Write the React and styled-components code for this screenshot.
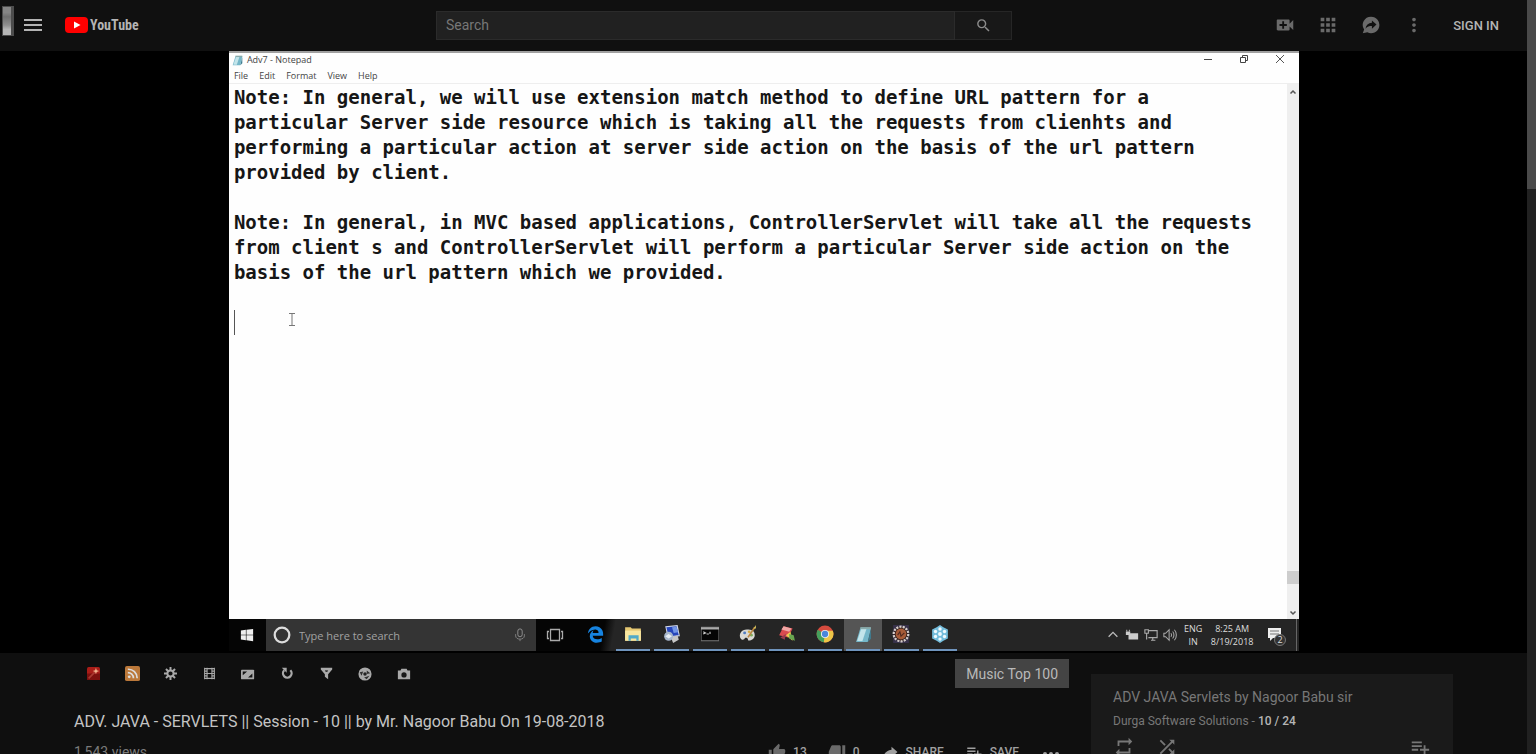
import React from "react";
import styled, { createGlobalStyle } from "styled-components";
import {
  MdMenu, MdSearch, MdVideoCall, MdApps, MdMoreVert, MdThumbUp, MdThumbDown,
  MdPlaylistAdd, MdRepeat, MdShuffle,
} from "react-icons/md";
import { FaWindows, FaEdgeLegacy } from "react-icons/fa";

const Global = createGlobalStyle`
  * { box-sizing: border-box; }
  body { margin: 0; background: #0f0f0f; font-family: Roboto, "Liberation Sans", sans-serif; }
  button { font: inherit; color: inherit; background: none; border: 0; padding: 0; cursor: pointer; }
  svg { display: block; flex: none; }
  h1, h2, p, pre { margin: 0; }
  a { color: inherit; text-decoration: none; }
`;

const Viewport = styled.div`
  display: flex;
  height: 100vh;
  overflow: hidden;
`;
const Page = styled.div`
  flex: 1;
  min-width: 0;
`;
const ScrollTrack = styled.div`
  width: 9px;
  background: #212121;
`;
const ScrollThumb = styled.div`
  height: 25%;
  background: #4a4a4a;
`;

/* Masthead */
const Header = styled.header`
  display: grid;
  grid-template-columns: minmax(0, 436fr) minmax(0, 576fr) minmax(0, 515fr);
  align-items: center;
  height: 51px;
  padding-bottom: 1px;
  background: #101010;
  color: #b4b4b4;
`;
const HeaderStart = styled.div`
  display: flex;
  align-items: center;
  padding-left: 2px;
`;
const Sliver = styled.span`
  width: 12px;
  height: 30px;
  margin: 0 7px 8px 0;
  border: 1px solid #4c4c4c;
  border-right-width: 3px;
  background: linear-gradient(#858585 0 20%, #6f6f6f 35%, #8f8f8f 65%, #b5b5b5 80%);
`;
const Logo = styled.a`
  display: flex;
  align-items: center;
  gap: 2px;
  margin-left: 20px;
  font: bold 14px/24px "Liberation Sans Narrow", "Roboto Condensed", sans-serif;
`;
const SearchForm = styled.form`
  display: flex;
  height: 29px;
`;
const SearchInput = styled.input`
  flex: 1;
  min-width: 0;
  padding: 0 9px;
  border: 1px solid #2b2b2b;
  background: #212121;
  color: #aaa;
  font: 14px Roboto, sans-serif;
  &::placeholder { color: #777; opacity: 1; }
`;
const SearchButton = styled.button`
  display: grid;
  place-items: center;
  width: 57px;
  border: 1px solid #262626;
  border-left: 0;
  background: #181818;
  color: #8c8c8c;
`;
const HeaderEnd = styled.div`
  display: flex;
  align-items: center;
  justify-content: flex-end;
  gap: 21px;
  padding-right: 28px;
  color: #6a6a6a;
`;
const SignIn = styled.a`
  margin-left: 7px;
  color: #b4b4b4;
  font-size: 13px;
  font-weight: 500;
`;

/* Video stage */
const Stage = styled.main`
  display: flex;
  justify-content: center;
  height: calc(100vh - 152px);
  padding-left: 1px;
  background: #000;
`;
const Screen = styled.section`
  display: flex;
  flex-direction: column;
  height: 100%;
  aspect-ratio: 16 / 9;
  padding-bottom: 2px;
  background: #000;
  font-family: "Open Sans", "Noto Sans", sans-serif;
`;
const Notepad = styled.div`
  flex: 1;
  min-height: 0;
  display: flex;
  flex-direction: column;
  background: #fefefe;
  color: #444;
  border-top: 2px solid #a0a0a0;
`;
const TitleBar = styled.div`
  display: flex;
  align-items: center;
  height: 14px;
  padding: 0 13px 0 3px;
  font-size: 9px;
  line-height: 14px;
`;
const WindowTitle = styled.span`
  flex: 1;
  padding-left: 4px;
`;
const WindowButtons = styled.div`
  display: flex;
  gap: 24px;
`;
const MenuBar = styled.nav`
  display: flex;
  gap: 11px;
  height: 17px;
  padding: 0 5px;
  border-bottom: 1px solid #eee;
  font-size: 9px;
  line-height: 17px;
`;
const Editor = styled.div`
  flex: 1;
  min-height: 0;
  display: flex;
`;
const Document = styled.pre`
  flex: 1;
  min-width: 0;
  padding: 1px 5px 0;
  color: #161616;
  font: bold 19px/25px "DejaVu Sans Mono", "Liberation Mono", monospace;
`;
const CaretLine = styled.div`
  display: flex;
  gap: 52px;
  height: 25px;
`;
const Caret = styled.span`
  width: 1px;
  height: 25px;
  background: #555;
`;
const EditorScroll = styled.div`
  display: flex;
  flex-direction: column;
  align-items: center;
  width: 12px;
  padding: 4px 0 2px;
  background: #efefef;
`;
const EditorThumb = styled.span`
  width: 12px;
  height: 13px;
  margin: auto 0 25px;
  background: #cdcdcd;
`;

/* Taskbar inside the video */
const Taskbar = styled.div`
  display: flex;
  align-items: stretch;
  height: 32px;
  background: linear-gradient(100deg, #050505 0 35%, #252525 36%);
  color: #ddd;
`;
const TaskCell = styled.button`
  display: grid;
  place-items: center;
  width: ${(p) => p.$width || 38}px;
`;
const TaskSearch = styled.label`
  display: flex;
  align-items: center;
  gap: 8px;
  width: 270px;
  padding: 0 9px 0 7px;
  background: #343434;
`;
const TaskInput = styled.input`
  flex: 1;
  min-width: 0;
  padding: 0;
  border: 0;
  background: none;
  font: 11px "Open Sans", sans-serif;
  &::placeholder { color: #a2a2a2; opacity: 1; }
`;
const Apps = styled.div`
  display: grid;
  grid-template-columns: repeat(10, 1fr);
  width: 383px;
  margin-left: 2px;
`;
const AppButton = styled.button`
  display: grid;
  place-items: center;
  background: ${(p) => (p.$active ? "#555" : "transparent")};
  border-bottom: 2px solid transparent;
  border-image: ${(p) =>
    p.$open ? "linear-gradient(90deg, transparent 10%, #6f94bd 10% 90%, transparent 90%) 2" : "none"};
`;
const Tray = styled.div`
  display: flex;
  align-items: center;
  gap: 5px;
  margin-left: auto;
  margin-right: 2px;
  padding-right: 4px;
  border-right: 1px solid #666;
`;
const TrayText = styled.span`
  width: ${(p) => p.$width}px;
  text-align: center;
  font-size: 9px;
  line-height: 13px;
`;

/* Below the video */
const Below = styled.div`
  display: grid;
  grid-template-columns: minmax(0, 1fr) 362px;
  gap: 22px;
  padding: 0 74px;
`;
const Tools = styled.div`
  display: flex;
  justify-content: space-between;
  padding-top: 6px;
`;
const ToolIcons = styled.div`
  display: grid;
  grid-template-columns: repeat(9, 1fr);
  width: 349px;
  height: 29px;
`;
const ToolButton = styled.button`
  display: grid;
  place-items: center;
  color: #a9a9a9;
`;
const MusicButton = styled.button`
  height: 29px;
  padding: 0 11px;
  background: #444;
  color: #b9b9b9;
  font: 14px Roboto, sans-serif;
`;
const VideoTitle = styled.h1`
  margin-top: 22px;
  color: #c4c4c4;
  font-size: 16px;
  font-weight: 400;
  line-height: 24px;
`;
const InfoRow = styled.div`
  display: flex;
  justify-content: space-between;
  margin-top: 7px;
  color: #7b7b7b;
  font-size: 14px;
  line-height: 22px;
`;
const Actions = styled.div`
  display: flex;
  align-items: center;
  gap: 21px;
  padding-right: 7px;
`;
const Action = styled.button`
  display: flex;
  align-items: center;
  gap: 7px;
  color: ${(p) => (p.$muted ? "#6a6a6a" : "#a0a0a0")};
  font-size: 12px;
  font-weight: 500;
  line-height: 22px;
`;
const ActionText = styled.span`
  color: #a0a0a0;
`;
const Playlist = styled.aside`
  margin-top: 21px;
  padding: 11px 22px;
  background: #1a1a1a;
  color: #777;
`;
const PlaylistTitle = styled.h2`
  font-size: 14px;
  font-weight: 400;
  line-height: 24px;
`;
const PlaylistMeta = styled.p`
  font-size: 12px;
  line-height: 24px;
`;
const Count = styled.span`
  color: #b5b5b5;
  font-weight: 500;
`;
const PlaylistTools = styled.div`
  display: flex;
  align-items: center;
  gap: 21px;
  margin-top: 3px;
`;
const PushRight = styled.button`
  margin-left: auto;
`;

const Icon = ({ w = 16, h, box = "0 0 16 16", children }) => (
  <svg width={w} height={h || w} viewBox={box} fill="none" aria-hidden="true">{children}</svg>
);

const NoteIcon = ({ size }) => (
  <Icon w={size}>
    <path d="M5 2h10l-3 13H1z" fill="#75b7c9" />
    <path d="M6 2h5L7 14H2z" fill="#c3e5eb" />
    <path d="M5 1h10v2H5z" fill="#8aa" />
    <path d="M12 15l3-12v9z" fill="#3f7d91" />
  </Icon>
);

const apps = [
  { name: "Edge", icon: <FaEdgeLegacy size={17} color="#1683e0" /> },
  { name: "File Explorer", open: true, icon: (
    <Icon w={18}><path d="M1 2h5l1 1h8v11H1z" fill="#e5c873" /><path d="M1 5h14v9H1z" fill="#f8e6a0" /><path d="M4 9h9v5h-2v-2H6v2H4z" fill="#50a9c9" /></Icon>
  ) },
  { name: "Remote Desktop", open: true, icon: (
    <Icon w={18}><path d="M2 1l11-1 2 10-11 1z" fill="#d0d8ea" /><path d="M3 2l9-.8 2 8-9 .8z" fill="#2645ba" /><path d="M8 2l4-.5 1.500 5-4 .5z" fill="#7296e7" /><path d="M7 11l6-2 1 4-5 3z" fill="#c6c6c6" /><circle cx="5" cy="10" r="4" fill="#a7b6cb" /><path d="M2 10l3-2 3 2-3 2z" fill="#e6edf4" /></Icon>
  ) },
  { name: "Command Prompt", open: true, icon: (
    <Icon w={18}><path d="M0 2h16v12H0z" fill="#050505" stroke="#777" /><path d="M0 2h16v2H0z" fill="#aaa" /><path d="M2 6l2 1-2 1M5 8h2M8 6v2" stroke="#ccc" /></Icon>
  ) },
  { name: "Paint", open: true, icon: (
    <Icon w={18}><path d="M7 4C2 4 0 8 1 11s4 2 4 1 3-1 3 1 6 0 6-4-3-5-7-5z" fill="#d9d9d5" /><circle cx="5" cy="7" r="1.3" fill="#507dc3" /><circle cx="9" cy="6" r="1.2" fill="#d4a942" /><circle cx="11" cy="9" r="1.3" fill="#7cab5b" /><path d="M8 11l6-9" stroke="#b98643" strokeWidth="1.5" /><path d="M13 3l2-3 0 3z" fill="#d9c65d" /></Icon>
  ) },
  { name: "Image editor", open: true, icon: (
    <Icon w={18}><path d="M5 1l8 2-4 8-8-2z" fill="#d94b50" /><path d="M5 1l7 2-2 3-7-2z" fill="#f1a6a4" /><path d="M7 9l4-3 2 8z" fill="#edce51" /><path d="M10 8l4 1 1 5-5-2z" fill="#68a650" /><path d="M2 11l5-3-1 5z" fill="#973b4d" /></Icon>
  ) },
  { name: "Chrome", open: true, icon: (
    <Icon w={18}><circle cx="8" cy="8" r="7.5" fill="#d64b3e" /><path d="M8 8L1.5 4.3A7.5 7.5 0 007 15.4L11 9z" fill="#45a05c" /><path d="M8 5h6.9A7.5 7.5 0 017 15.4z" fill="#edc547" /><circle cx="8" cy="8" r="3.6" fill="#eee" /><circle cx="8" cy="8" r="2.8" fill="#4a86da" /></Icon>
  ) },
  { name: "Notepad", open: true, active: true, icon: <NoteIcon size={17} /> },
  { name: "Java IDE", open: true, icon: (
    <Icon w={18}><path d="M1 0h14v16H1z" fill="#37314a" /><circle cx="8" cy="8" r="6.5" fill="#35211d" stroke="#d6cdca" strokeWidth="2" strokeDasharray="1.9 1" /><circle cx="8" cy="8" r="4.8" fill="#a75b38" /><path d="M5 9l2-3 1 4 3-3" stroke="#512a1f" /></Icon>
  ) },
  { name: "Network tool", open: true, icon: (
    <Icon w={18}><path d="M8 0l3 2 4 2v4l0 4-4 2-3 2-3-2-4-2V4l4-2z" fill="#74bddc" /><g fill="#eefaff"><circle cx="8" cy="8" r="1.7" /><circle cx="8" cy="3.5" r="1.5" /><circle cx="8" cy="12.5" r="1.5" /><circle cx="4" cy="5.8" r="1.5" /><circle cx="12" cy="5.8" r="1.5" /><circle cx="4" cy="10.2" r="1.5" /><circle cx="12" cy="10.2" r="1.5" /></g></Icon>
  ) },
];

const tools = [
  { name: "Magic", icon: (
    <Icon w={13}><rect width="16" height="16" rx="2" fill="#a91d18" /><path d="M0 8h16v8H0z" fill="#7d100e" /><path d="M2 14l8-8" stroke="#a93a32" strokeWidth="2" /><path d="M11 1l1 3 3 1-3 1-1 3-1-3-3-1 3-1z" fill="#f1b28d" /></Icon>
  ) },
  { name: "Feed", icon: (
    <Icon w={15}><rect width="16" height="16" rx="2" fill="#bb783a" /><circle cx="4.5" cy="11.5" r="1.5" fill="#ddd" /><path d="M3 7a6 6 0 016 6M3 3.500a9.500 9.500 0 0110 9.500" stroke="#ddd" strokeWidth="1.8" /></Icon>
  ) },
  { name: "Settings", icon: (
    <Icon w={13}><path d="M8 0v16M0 8h16M2.400 2.400l11.200 11.200M2.400 13.600L13.600 2.400" stroke="currentColor" strokeWidth="2.400" /><circle cx="8" cy="8" r="3.800" fill="#101010" stroke="currentColor" strokeWidth="2.400" /></Icon>
  ) },
  { name: "Cinema", icon: (
    <Icon w={13}><path d="M2 1v14M14 1v14M5 1v14M11 1v14" stroke="currentColor" strokeWidth="1.300" /><path d="M2 2h12M2 5h3M2 8h12M2 11h3M2 14h12M11 5h3M11 11h3" stroke="currentColor" strokeWidth="1.400" /></Icon>
  ) },
  { name: "Resize", icon: (
    <Icon w={14}><rect y="3" width="15" height="11" rx="1" fill="currentColor" /><path d="M2 5h5L2 9.500zM13 12H8l5-4.500z" fill="#161616" /></Icon>
  ) },
  { name: "Loop", icon: (
    <Icon w={13}><path d="M4 4a5.300 5.300 0 107.500 0" stroke="currentColor" strokeWidth="2.800" /><path d="M1 1h6v6z" fill="currentColor" /></Icon>
  ) },
  { name: "Filter", icon: (
    <Icon w={13}><path d="M1 1h14v2l-5 6v6l-4-3V9L1 3z" fill="currentColor" /><path d="M6 4h4L9 6H7z" fill="#333" /></Icon>
  ) },
  { name: "Disc", icon: (
    <Icon w={14}><circle cx="8" cy="8" r="7.500" fill="currentColor" /><path d="M2 6l4-1-2 5zM10 4l4 3-4 1zM7 12l6-2-3 4z" fill="#303030" /><circle cx="8" cy="8" r="2" fill="#222" /></Icon>
  ) },
  { name: "Snapshot", icon: (
    <Icon w={14}><path d="M1 4h3l1-2h6l1 2h3v10H1z" fill="currentColor" /><circle cx="8" cy="9" r="3" fill="#1a1a1a" /></Icon>
  ) },
];

const noteText = `Note: In general, we will use extension match method to define URL pattern for a
particular Server side resource which is taking all the requests from clienhts and
performing a particular action at server side action on the basis of the url pattern
provided by client.

Note: In general, in MVC based applications, ControllerServlet will take all the requests
from client s and ControllerServlet will perform a particular Server side action on the
basis of the url pattern which we provided.

`;

function Masthead() {
  return (
    <Header>
      <HeaderStart>
        <Sliver />
        <button aria-label="Menu"><MdMenu size={24} /></button>
        <Logo href="#" aria-label="YouTube">
          <Icon w={23} h={16} box="0 0 23 16"><rect width="23" height="16" rx="4" fill="#f00" /><path d="M9 4.500v7L15.500 8z" fill="#fff" /></Icon>
          YouTube
        </Logo>
      </HeaderStart>
      <SearchForm onSubmit={(e) => e.preventDefault()}>
        <SearchInput aria-label="Search" placeholder="Search" />
        <SearchButton aria-label="Submit search"><MdSearch size={17} /></SearchButton>
      </SearchForm>
      <HeaderEnd>
        <button aria-label="Create"><MdVideoCall size={22} /></button>
        <button aria-label="Apps"><MdApps size={22} /></button>
        <button aria-label="Messages">
          <Icon w={22} box="0 0 24 24"><path d="M12 3a9 9 0 11-4 17l-5 1 1.500-4A9 9 0 0112 3z" fill="currentColor" /><path d="M13 7l5 4.500-5 4.500v-3c-3 0-5 .500-7 3 .500-4 3-6 7-6.500z" fill="#101010" /></Icon>
        </button>
        <button aria-label="Settings"><MdMoreVert size={22} /></button>
        <SignIn href="#">SIGN IN</SignIn>
      </HeaderEnd>
    </Header>
  );
}

function NotepadWindow() {
  return (
    <Notepad>
      <TitleBar>
        <NoteIcon size={11} />
        <WindowTitle>Adv7 - Notepad</WindowTitle>
        <WindowButtons>
          <button aria-label="Minimize"><Icon w={12} box="0 0 12 12"><path d="M2 5.500h8" stroke="#444" /></Icon></button>
          <button aria-label="Restore"><Icon w={12} box="0 0 12 12"><path d="M2.500 3.500h5v5h-5zM4.500 3V1.500h5v5H8" stroke="#444" /></Icon></button>
          <button aria-label="Close"><Icon w={12} box="0 0 12 12"><path d="M2 1l8 8M10 1l-8 8" stroke="#555" /></Icon></button>
        </WindowButtons>
      </TitleBar>
      <MenuBar>
        {["File", "Edit", "Format", "View", "Help"].map((m) => <span key={m}>{m}</span>)}
      </MenuBar>
      <Editor>
        <Document>
          {noteText}
          <CaretLine>
            <Caret />
            <Icon w={10} h={20} box="0 0 10 20"><path d="M2 3.500h6M2 15.500h6M5 3.500v12" stroke="#777" /></Icon>
          </CaretLine>
        </Document>
        <EditorScroll>
          <Icon w={8} box="0 0 8 8"><path d="M1.500 5.500L4 3l2.500 2.500" stroke="#555" strokeWidth="1.500" /></Icon>
          <EditorThumb />
          <Icon w={8} box="0 0 8 8"><path d="M1.500 2.500L4 5l2.500-2.500" stroke="#555" strokeWidth="1.500" /></Icon>
        </EditorScroll>
      </Editor>
    </Notepad>
  );
}

function DesktopTaskbar() {
  return (
    <Taskbar>
      <TaskCell $width={37} aria-label="Start"><FaWindows size={14} color="#eee" /></TaskCell>
      <TaskSearch>
        <Icon w={18}><circle cx="8" cy="8" r="6.500" stroke="#ddd" strokeWidth="2" /></Icon>
        <TaskInput placeholder="Type here to search" aria-label="Type here to search" />
        <Icon w={14}><rect x="5.500" y="1" width="5" height="9" rx="2.500" stroke="#999" /><path d="M3 7v2c0 5 10 5 10 0V7M8 13v2" stroke="#888" /></Icon>
      </TaskSearch>
      <TaskCell aria-label="Task view">
        <Icon w={18} h={14} box="0 0 18 14"><path d="M4.500 1.500h9v11h-9zM3 3.500H1.500v7H3M15 3.500h1.500v7H15" stroke="#aaa" strokeWidth="1.300" /></Icon>
      </TaskCell>
      <Apps>
        {apps.map((a) => (
          <AppButton key={a.name} aria-label={a.name} $open={a.open} $active={a.active}>{a.icon}</AppButton>
        ))}
      </Apps>
      <Tray>
        <Icon w={14}><path d="M3 10l5-5 5 5" stroke="#bbb" strokeWidth="1.500" /></Icon>
        <Icon w={14}><path d="M4 6h11v7H4zM1 4h5v4H1z" fill="#ccc" /><path d="M2 2v2M5 2v2" stroke="#ccc" /></Icon>
        <Icon w={14}><path d="M5 3h10v8H5M8 14h5M10 11v3M1 2h4v4H1zM3 6v7" stroke="#aaa" strokeWidth="1.300" /></Icon>
        <Icon w={14}><path d="M1 6h2l4-4v12l-4-4H1zM9 6c1 1 1 3 0 4M11 4c2 2 2 6 0 8M13 2c3 3 3 9 0 12" stroke="#aaa" strokeWidth="1.200" /></Icon>
        <TrayText $width={22}>ENG<br />IN</TrayText>
        <TrayText $width={46}>8:25 AM<br />8/19/2018</TrayText>
        <Icon w={32} h={24} box="0 0 32 24"><path d="M8 5h13v10h-8l-3 3v-3H8z" fill="#eee" /><path d="M10 8h9M10 11h9" stroke="#777" /><circle cx="20" cy="17" r="5.500" fill="#333" stroke="#777" /><text x="20" y="20" fill="#ddd" fontSize="9" textAnchor="middle">2</text></Icon>
      </Tray>
    </Taskbar>
  );
}

export default function App() {
  return (
    <>
      <Global />
      <Viewport>
        <Page>
          <Masthead />
          <Stage>
            <Screen>
              <NotepadWindow />
              <DesktopTaskbar />
            </Screen>
          </Stage>
          <Below>
            <section>
              <Tools>
                <ToolIcons>
                  {tools.map((t) => <ToolButton key={t.name} aria-label={t.name}>{t.icon}</ToolButton>)}
                </ToolIcons>
                <MusicButton>Music Top 100</MusicButton>
              </Tools>
              <VideoTitle>ADV. JAVA - SERVLETS || Session - 10 || by Mr. Nagoor Babu On 19-08-2018</VideoTitle>
              <InfoRow>
                <span>1,543 views</span>
                <Actions>
                  <Action $muted><MdThumbUp size={18} /><ActionText>13</ActionText></Action>
                  <Action $muted><MdThumbDown size={18} /><ActionText>0</ActionText></Action>
                  <Action>
                    <Icon w={18} box="0 0 24 24"><path d="M14 5l8 7-8 7v-4c-5 0-8 1-11 4 1-6 5-9 11-10z" fill="currentColor" /></Icon>
                    SHARE
                  </Action>
                  <Action><MdPlaylistAdd size={18} />SAVE</Action>
                  <Action aria-label="More actions">
                    <Icon w={22} box="0 0 22 22"><g fill="currentColor"><circle cx="5" cy="13" r="2" /><circle cx="11" cy="13" r="2" /><circle cx="17" cy="13" r="2" /></g></Icon>
                  </Action>
                </Actions>
              </InfoRow>
            </section>
            <Playlist>
              <PlaylistTitle>ADV JAVA Servlets by Nagoor Babu sir</PlaylistTitle>
              <PlaylistMeta>Durga Software Solutions - <Count>10 / 24</Count></PlaylistMeta>
              <PlaylistTools>
                <button aria-label="Loop playlist"><MdRepeat size={22} /></button>
                <button aria-label="Shuffle"><MdShuffle size={22} /></button>
                <PushRight aria-label="Save playlist"><MdPlaylistAdd size={22} /></PushRight>
              </PlaylistTools>
            </Playlist>
          </Below>
        </Page>
        <ScrollTrack><ScrollThumb /></ScrollTrack>
      </Viewport>
    </>
  );
}
